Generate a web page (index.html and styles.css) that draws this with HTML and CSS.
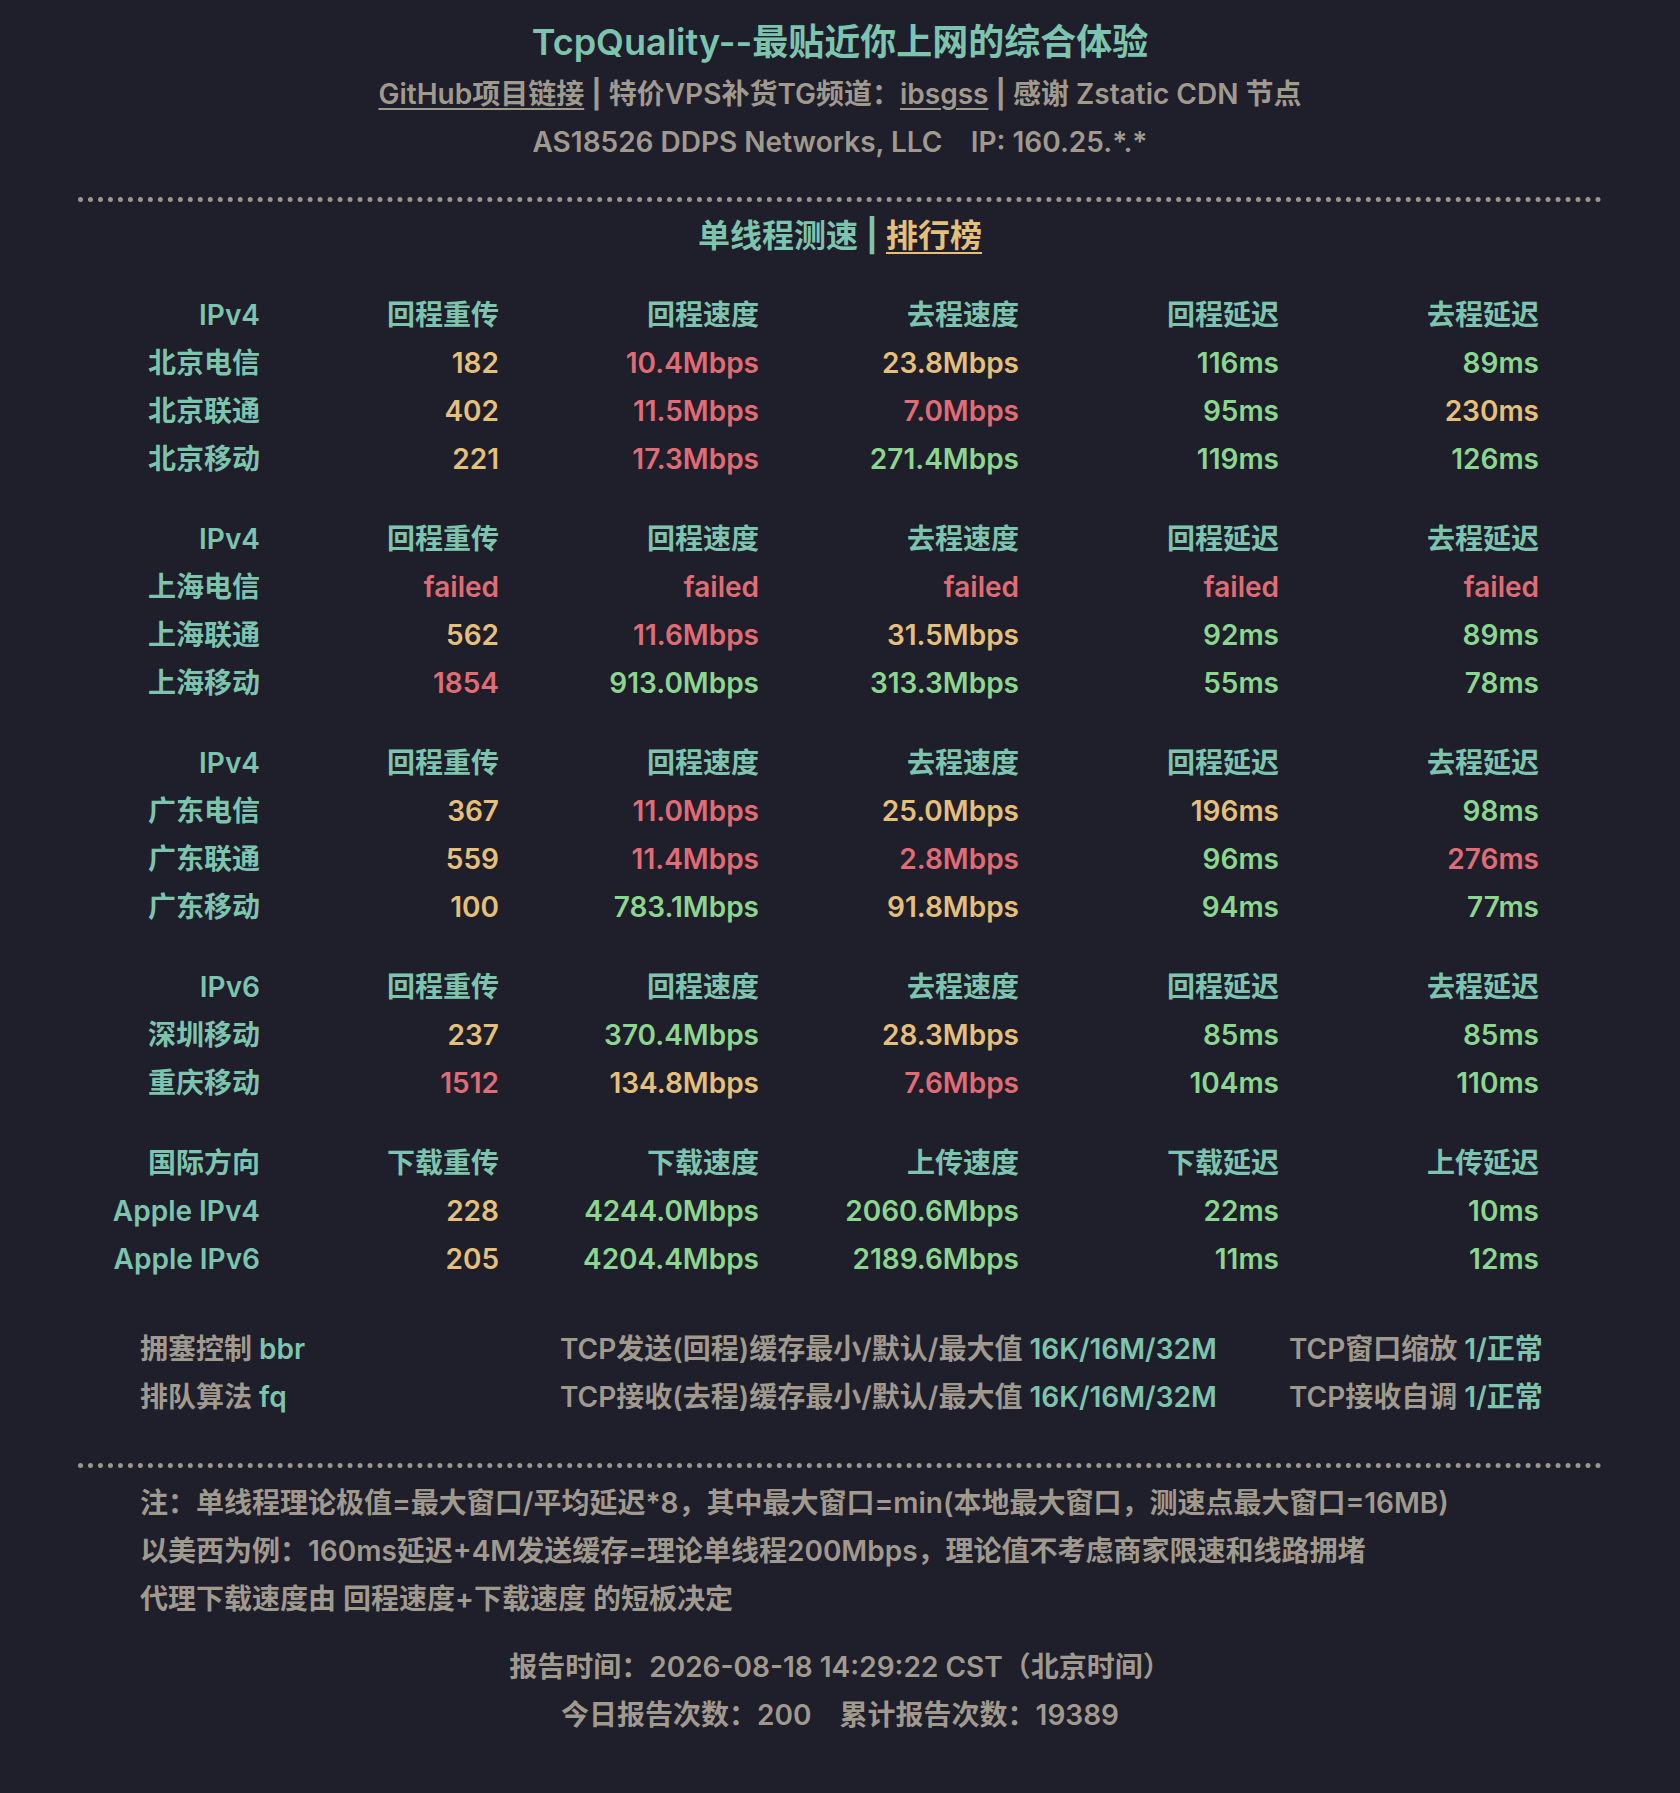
FILE: index.html
```html
<!DOCTYPE html>
<html lang="zh-CN">
<head>
<meta charset="utf-8">
<title>TcpQuality</title>
<link rel="stylesheet" href="styles.css">
</head>
<body>
<div class="page">
  <header class="head">
    <h1 class="title">TcpQuality--最贴近你上网的综合体验</h1>
    <p class="line"><a class="link" href="#">GitHub项目链接</a> <span class="bar">|</span> 特价VPS补货TG频道：<a class="link" href="#">ibsgss</a> <span class="bar">|</span> 感谢 Zstatic CDN 节点</p>
    <p class="line">AS18526 DDPS Networks, LLC&nbsp;&nbsp;&nbsp;&nbsp;IP: 160.25.*.*</p>
  </header>

  <hr class="dots">

  <p class="tabs"><span class="t">单线程测速</span> <span class="tbar">|</span> <a class="rank" href="#">排行榜</a></p>

  <section class="results">
    <div class="group">
      <div class="row hd"><span>IPv4</span><span>回程重传</span><span>回程速度</span><span>去程速度</span><span>回程延迟</span><span>去程延迟</span></div>
      <div class="row"><span class="lb">北京电信</span><span class="y">182</span><span class="r">10.4Mbps</span><span class="y">23.8Mbps</span><span class="g">116ms</span><span class="g">89ms</span></div>
      <div class="row"><span class="lb">北京联通</span><span class="y">402</span><span class="r">11.5Mbps</span><span class="r">7.0Mbps</span><span class="g">95ms</span><span class="y">230ms</span></div>
      <div class="row"><span class="lb">北京移动</span><span class="y">221</span><span class="r">17.3Mbps</span><span class="g">271.4Mbps</span><span class="g">119ms</span><span class="g">126ms</span></div>
    </div>
    <div class="group">
      <div class="row hd"><span>IPv4</span><span>回程重传</span><span>回程速度</span><span>去程速度</span><span>回程延迟</span><span>去程延迟</span></div>
      <div class="row"><span class="lb">上海电信</span><span class="r">failed</span><span class="r">failed</span><span class="r">failed</span><span class="r">failed</span><span class="r">failed</span></div>
      <div class="row"><span class="lb">上海联通</span><span class="y">562</span><span class="r">11.6Mbps</span><span class="y">31.5Mbps</span><span class="g">92ms</span><span class="g">89ms</span></div>
      <div class="row"><span class="lb">上海移动</span><span class="r">1854</span><span class="g">913.0Mbps</span><span class="g">313.3Mbps</span><span class="g">55ms</span><span class="g">78ms</span></div>
    </div>
    <div class="group">
      <div class="row hd"><span>IPv4</span><span>回程重传</span><span>回程速度</span><span>去程速度</span><span>回程延迟</span><span>去程延迟</span></div>
      <div class="row"><span class="lb">广东电信</span><span class="y">367</span><span class="r">11.0Mbps</span><span class="y">25.0Mbps</span><span class="y">196ms</span><span class="g">98ms</span></div>
      <div class="row"><span class="lb">广东联通</span><span class="y">559</span><span class="r">11.4Mbps</span><span class="r">2.8Mbps</span><span class="g">96ms</span><span class="r">276ms</span></div>
      <div class="row"><span class="lb">广东移动</span><span class="y">100</span><span class="g">783.1Mbps</span><span class="y">91.8Mbps</span><span class="g">94ms</span><span class="g">77ms</span></div>
    </div>
    <div class="group">
      <div class="row hd"><span>IPv6</span><span>回程重传</span><span>回程速度</span><span>去程速度</span><span>回程延迟</span><span>去程延迟</span></div>
      <div class="row"><span class="lb">深圳移动</span><span class="y">237</span><span class="g">370.4Mbps</span><span class="y">28.3Mbps</span><span class="g">85ms</span><span class="g">85ms</span></div>
      <div class="row"><span class="lb">重庆移动</span><span class="r">1512</span><span class="y">134.8Mbps</span><span class="r">7.6Mbps</span><span class="g">104ms</span><span class="g">110ms</span></div>
    </div>
    <div class="group">
      <div class="row hd"><span>国际方向</span><span>下载重传</span><span>下载速度</span><span>上传速度</span><span>下载延迟</span><span>上传延迟</span></div>
      <div class="row"><span class="lb">Apple IPv4</span><span class="y">228</span><span class="g">4244.0Mbps</span><span class="g">2060.6Mbps</span><span class="g">22ms</span><span class="g">10ms</span></div>
      <div class="row"><span class="lb">Apple IPv6</span><span class="y">205</span><span class="g">4204.4Mbps</span><span class="g">2189.6Mbps</span><span class="g">11ms</span><span class="g">12ms</span></div>
    </div>
  </section>

  <section class="sys">
    <div class="sysrow"><span>拥塞控制 <b>bbr</b></span><span>TCP发送(回程)缓存最小/默认/最大值 <b>16K/16M/32M</b></span><span>TCP窗口缩放 <b>1/正常</b></span></div>
    <div class="sysrow"><span>排队算法 <b>fq</b></span><span>TCP接收(去程)缓存最小/默认/最大值 <b>16K/16M/32M</b></span><span>TCP接收自调 <b>1/正常</b></span></div>
  </section>

  <hr class="dots dots2">

  <section class="notes">
    <p>注：单线程理论极值=最大窗口/平均延迟*8，其中最大窗口=min(本地最大窗口，测速点最大窗口=16MB)</p>
    <p>以美西为例：160ms延迟+4M发送缓存=理论单线程200Mbps，理论值不考虑商家限速和线路拥堵</p>
    <p>代理下载速度由 回程速度+下载速度 的短板决定</p>
  </section>

  <footer class="foot">
    <p>报告时间：2026-08-18 14:29:22 CST（北京时间）</p>
    <p>今日报告次数：200&nbsp;&nbsp;&nbsp;&nbsp;累计报告次数：19389</p>
  </footer>
</div>
</body>
</html>
```
FILE: styles.css
```css
html, body {
  margin: 0;
  padding: 0;
  background: #1f1e2b;
}
body {
  font-family: Inter, "Noto Sans CJK SC", "Noto Sans", sans-serif;
  font-weight: 600;
  font-size: 28px;
  color: #a09a8e;
  min-height: 1793px;
}
.page {
  padding: 14px 78px 0;
}
p { margin: 0; }
.head { text-align: center; }
.title {
  margin: 0;
  font-size: 36px;
  line-height: 56px;
  font-weight: 600;
  color: #7dc4ae;
}
.line {
  line-height: 48px;
}
.link {
  color: #a09a8e;
  text-decoration: underline;
  text-underline-offset: 4px;
  text-decoration-thickness: 2px;
}
.bar {
  font-weight: 700;
}
.dots {
  border: 0;
  border-top: 5px dotted #9d978b;
  margin: 31px 0 0;
  height: 0;
}
.tabs {
  margin-top: 10px;
  text-align: center;
  line-height: 48px;
  font-size: 32px;
  color: #7dc4ae;
}
.tbar { font-weight: 700; }
.rank {
  color: #e5c07b;
  text-decoration: underline;
  text-underline-offset: 5px;
  text-decoration-thickness: 2px;
}
.results {
  margin-top: 31px;
  display: flex;
  flex-direction: column;
  gap: 32px;
}
.row {
  display: grid;
  grid-template-columns: 182px 239px 260px 260px 260px 260px;
  line-height: 48px;
  text-align: right;
}
.hd, .lb { color: #7dc4ae; }
.y { color: #e5c07b; }
.r { color: #e06c75; }
.g { color: #8cd68f; }
.sys {
  margin-top: 42px;
  padding-left: 62px;
}
.sysrow {
  display: grid;
  grid-template-columns: 420px 729px auto;
  line-height: 48px;
}
.sysrow b {
  font-weight: 600;
  color: #7dc4ae;
}
.dots2 { margin-top: 42px; }
.notes {
  margin-top: 11px;
  padding-left: 62px;
  line-height: 48px;
}
.foot {
  margin-top: 20px;
  text-align: center;
  line-height: 48px;
}
```
